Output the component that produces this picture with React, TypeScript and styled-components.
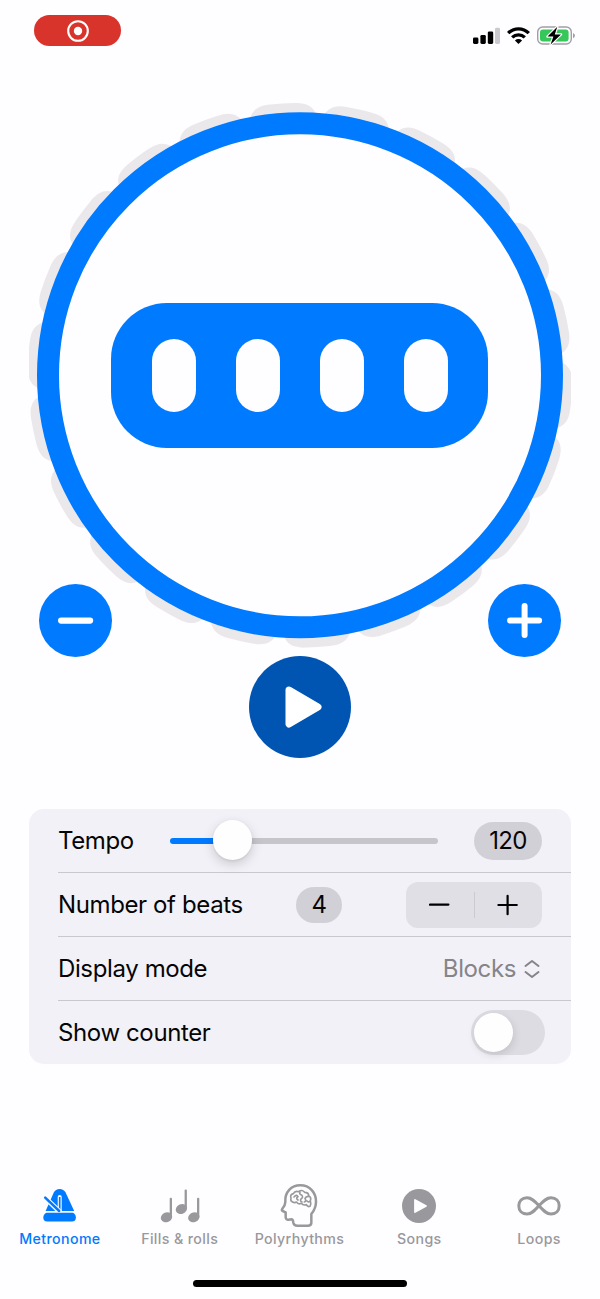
import React from "react";
import styled, { createGlobalStyle } from "styled-components";

const BLUE = "#007aff";
const PAGE = "#fefdff";
const GREY = "#99989c";

const Global = createGlobalStyle`
  *, *::before, *::after { box-sizing: border-box; }
  body {
    margin: 0;
    background: ${PAGE};
    font-family: Inter, "Liberation Sans", sans-serif;
    color: #050506;
  }
  svg { display: block; }
  button { border: 0; padding: 0; font: inherit; color: inherit; }
`;

const Screen = styled.main`
  width: 600px;
  height: 1299px;
  display: flex;
  flex-direction: column;
  overflow: hidden;
  background: ${PAGE};
`;

const StatusBar = styled.header`
  height: 103px;
  flex: none;
  display: flex;
  justify-content: space-between;
  align-items: flex-start;
  padding: 15px 25px 0 34px;
`;

const RecordPill = styled.div`
  width: 87px;
  height: 31px;
  border-radius: 15.5px;
  background: #d9342b;
  display: grid;
  place-items: center;
`;

const StatusIcons = styled.div`
  display: flex;
  gap: 7px;
  padding-top: 11px;
`;

const Dial = styled.section`
  width: 542px;
  height: 546px;
  flex: none;
  margin: 0 auto;
  display: grid;
  place-items: center;
  > * { grid-area: 1 / 1; }
`;

const Blocks = styled.div`
  width: 377px;
  height: 145px;
  margin: -1px 1px 0 0;
  border-radius: 56px;
  background: ${BLUE};
  display: flex;
  justify-content: center;
  align-items: center;
  gap: 40px;
`;

const Block = styled.div`
  width: 44px;
  height: 73px;
  border-radius: 22px;
  background: ${PAGE};
`;

const Controls = styled.div`
  height: 174.4px;
  flex: none;
  margin-top: -65px;
  padding: 0 39px;
  display: flex;
  justify-content: space-between;
  align-items: flex-start;
`;

const RoundButton = styled.button<{ $size: number; $color: string; $low?: boolean }>`
  width: ${(p) => p.$size}px;
  height: ${(p) => p.$size}px;
  border-radius: 50%;
  background: ${(p) => p.$color};
  align-self: ${(p) => (p.$low ? "flex-end" : "flex-start")};
  display: grid;
  place-items: center;
`;

const Card = styled.section`
  width: 542px;
  flex: none;
  margin: 50.6px auto 0;
  border-radius: 15px;
  background: #f2f1f7;
  padding-left: 29px;
`;

const Row = styled.div`
  height: 63.9px;
  padding-right: 29px;
  display: flex;
  align-items: center;
  &:first-child { height: 63.2px; }
  & + & { border-top: 1.4px solid #c9c8ce; }
`;

const Label = styled.span`
  padding-top: 1px;
  font-size: 24px;
  line-height: 30px;
  letter-spacing: -0.38px;
  white-space: nowrap;
`;

const Slider = styled.div`
  width: 268px;
  margin-left: auto;
  margin-right: 36.5px;
  display: flex;
  align-items: center;
`;

const Track = styled.div<{ $filled?: boolean }>`
  height: 6px;
  flex: ${(p) => (p.$filled ? "0 0 45px" : "1")};
  margin-top: 1px;
  border-radius: ${(p) => (p.$filled ? "3px 0 0 3px" : "0 3px 3px 0")};
  background: ${(p) => (p.$filled ? BLUE : "#c6c5ca")};
`;

const Thumb = styled.div`
  width: 39.5px;
  height: 39.5px;
  flex: none;
  margin: -1px -1px 0 -2px;
  border-radius: 50%;
  background: #fffeff;
  box-shadow: 0 4px 12px rgba(0, 0, 0, 0.17), 0 1px 3px rgba(0, 0, 0, 0.08);
  z-index: 1;
`;

const Value = styled.div<{ $w: number; $h: number; $push?: boolean }>`
  width: ${(p) => p.$w}px;
  height: ${(p) => p.$h}px;
  margin-left: ${(p) => (p.$push ? "auto" : "0")};
  border-radius: ${(p) => p.$h / 2}px;
  background: #d1d0d6;
  display: grid;
  place-items: center;
  font-size: 24px;
  letter-spacing: -0.6px;
`;

const Stepper = styled.div`
  width: 136px;
  height: 46px;
  margin-left: 64px;
  border-radius: 12px;
  background: #e0dfe5;
  display: flex;
  align-items: center;
`;

const Step = styled.button`
  flex: 1;
  height: 26px;
  background: none;
  display: grid;
  place-items: center;
  & + & { border-left: 1.5px solid #cbcad0; }
`;

const Picker = styled.div`
  margin-left: auto;
  display: flex;
  align-items: center;
  gap: 8px;
  color: #858489;
  padding-right: 1px;
`;

const Toggle = styled.div`
  width: 74px;
  height: 45px;
  margin: 0 -3px 0 auto;
  border-radius: 23px;
  background: #dddce2;
  padding: 0 2.5px;
  display: flex;
  align-items: center;
`;

const ToggleKnob = styled.div`
  width: 39.5px;
  height: 39.5px;
  border-radius: 50%;
  background: #fffeff;
  box-shadow: 1px 3px 8px rgba(0, 0, 0, 0.12);
`;

const TabBar = styled.nav`
  flex: none;
  margin-top: auto;
  height: 97px;
  padding-right: 1px;
  display: grid;
  grid-template-columns: repeat(5, 1fr);
`;

const Tab = styled.div<{ $active?: boolean }>`
  display: flex;
  flex-direction: column;
  align-items: center;
  color: ${(p) => (p.$active ? BLUE : GREY)};
`;

const TabLabel = styled.span`
  margin-top: 1px;
  font-size: 14.2px;
  line-height: 18px;
  font-weight: 500;
  letter-spacing: 0.38px;
  white-space: nowrap;
`;

const HomeIndicator = styled.div`
  width: 214px;
  height: 7px;
  flex: none;
  margin: 0 auto 12px;
  border-radius: 4px;
  background: #000;
`;

const NOTCHES = Array.from({ length: 22 }, (_, i) => -3.75 + (i * 360) / 22);

function DialRing() {
  return (
    <svg width="542" height="546" viewBox="29 103 542 546">
      <g fill="#ebe8ec">
        {NOTCHES.map((angle) => (
          <path
            key={angle}
            d="M265.5 121C267.5 109 274 103.6 288 103.2Q300 102.6 312 103.2C326 103.6 332.5 109 334.5 121V130H265.5Z"
            transform={`rotate(${angle} 300 375.3)`}
          />
        ))}
      </g>
      <circle cx="300" cy="375.3" r="252" fill={PAGE} stroke={BLUE} strokeWidth="22" />
    </svg>
  );
}

function Signal() {
  return (
    <svg width="27" height="18" viewBox="0 0 27 18">
      <rect x="0" y="11.5" width="5.4" height="6.5" rx="1.4" />
      <rect x="7.4" y="8.9" width="5.4" height="9.1" rx="1.4" />
      <rect x="14.8" y="5.4" width="5.4" height="12.6" rx="1.4" />
      <rect x="22" y="1.7" width="5" height="16.3" rx="1.4" fill="#cbcacf" />
    </svg>
  );
}

function Wifi() {
  return (
    <svg width="23" height="18" viewBox="0 0 23 18" fill="none" stroke="#000" strokeWidth="3.3">
      <path d="M1.2 7.2C7 1.3 16 1.3 21.8 7.2" />
      <path d="M5.2 11.4C8.7 7.9 14.3 7.9 17.8 11.4" />
      <path d="M11.5 18L7.9 14.4C10 12.6 13 12.6 15.1 14.4Z" fill="#000" stroke="none" />
    </svg>
  );
}

function Battery() {
  return (
    <svg width="38" height="20" viewBox="0 0 38 20">
      <rect x="0.7" y="1" width="33.6" height="17" rx="5" fill="none" stroke="#a09fa4" strokeWidth="1.4" />
      <path d="M36 7Q38 8 38 9.6Q38 11.2 36 12.2Z" fill="#a09fa4" />
      <rect x="3" y="3.4" width="28.6" height="12.2" rx="3" fill="#35c759" />
      <path
        d="M20.3 .8L10.5 10.6H16.4L13.6 18.4L24 8.4H17.8Z"
        fill="#000"
        stroke={PAGE}
        strokeWidth="2.4"
        paintOrder="stroke"
        strokeLinejoin="round"
      />
    </svg>
  );
}

function MetronomeIcon() {
  return (
    <svg width="40" height="46" viewBox="40 1183 40 46">
      <path
        d="M45.6 1211L53.8 1192.6Q55.6 1189 59.6 1189Q63.6 1189 65.6 1192.6L74.2 1211Z"
        fill="currentColor"
      />
      <path d="M59.7 1197V1211" stroke={PAGE} strokeWidth="4" strokeLinecap="round" />
      <path d="M59.7 1197V1211" stroke="currentColor" strokeWidth="1.7" />
      <path d="M42.5 1195.2L60 1212" stroke={PAGE} strokeWidth="5" />
      <path d="M45.2 1197.6L59.2 1211" stroke="currentColor" strokeWidth="2.5" strokeLinecap="round" />
      <path
        d="M46.5 1212.8H72.8Q75.9 1214.3 75.9 1217.5Q75.9 1221.5 72 1221.5H47.2Q43.3 1221.5 43.3 1217.5Q43.3 1214.3 46.5 1212.8Z"
        fill="currentColor"
      />
    </svg>
  );
}

const NOTES = [
  { x: 171, y: 1217.3 },
  { x: 185.9, y: 1209 },
  { x: 198.3, y: 1217.3 },
];

function NotesIcon() {
  return (
    <svg width="40" height="46" viewBox="160 1183 40 46" fill="currentColor">
      {NOTES.map((n) => (
        <g key={n.x}>
          <rect x={n.x - 1.3} y={n.y - 19.5} width="2.3" height="20" rx="1" />
          <ellipse cx={n.x - 4.5} cy={n.y} rx="5.8" ry="4.8" transform={`rotate(-22 ${n.x - 4.5} ${n.y})`} />
        </g>
      ))}
    </svg>
  );
}

function HeadIcon() {
  return (
    <svg
      width="40"
      height="46"
      viewBox="147 39 120 138"
      fill="none"
      stroke="currentColor"
      strokeWidth="7.5"
      strokeLinejoin="round"
      strokeLinecap="round"
    >
      <path d="M166 96C164 66 184 46 211 46C240 46 258 68 258 95C258 110 252 122 244 132V159Q243 167 234 167H202Q192 167 190 158Q189 148 184 148L176 149Q167 150 167 141V127L158 123Q154 120 157 116Q166 105 166 96Z" />
      <g strokeWidth="5">
        <path d="M190 97Q180 94 183 84Q179 74 190 71Q195 61 206 65Q216 57 224 67Q236 67 236 77Q245 82 241 92Q244 101 240 109Q233 112 229 104Q219 107 214 100Q204 104 200 96Q195 99 190 97Z" />
        <path d="M192 81Q200 72 204 80Q196 84 204 90M210 66Q207 73 215 75Q221 82 213 87Q209 93 216 96M236 79Q228 78 225 85Q230 93 223 96M240 94Q235 98 231 93" />
      </g>
    </svg>
  );
}

function SongsIcon() {
  return (
    <svg width="40" height="46" viewBox="0 0 40 46">
      <circle cx="20" cy="23" r="17" fill="currentColor" />
      <path d="M16 17L27 23L16 29Z" fill={PAGE} stroke={PAGE} strokeWidth="1.8" strokeLinejoin="round" />
    </svg>
  );
}

function LoopIcon() {
  return (
    <svg width="46" height="46" viewBox="0 0 46 46" fill="none" stroke="currentColor" strokeWidth="3">
      <path d="M23 22.8C18.5 17.8 15.5 14.7 11 14.7C6 14.7 2.8 18 2.8 22.8S6 31 11 31C15.5 31 18.5 27.8 23 22.8C27.5 17.8 30.5 14.7 35 14.7C40 14.7 43.2 18 43.2 22.8S40 31 35 31C30.5 31 27.5 27.8 23 22.8Z" />
    </svg>
  );
}

const TABS = [
  { label: "Metronome", icon: <MetronomeIcon />, active: true },
  { label: "Fills & rolls", icon: <NotesIcon /> },
  { label: "Polyrhythms", icon: <HeadIcon /> },
  { label: "Songs", icon: <SongsIcon /> },
  { label: "Loops", icon: <LoopIcon /> },
];

export default function App() {
  return (
    <Screen>
      <Global />
      <StatusBar>
        <RecordPill>
          <svg width="24" height="24" viewBox="0 0 24 24">
            <circle cx="12" cy="12" r="9.8" fill="none" stroke="#fff" strokeWidth="2.1" />
            <circle cx="12" cy="12" r="4.2" fill="#fff" />
          </svg>
        </RecordPill>
        <StatusIcons>
          <Signal />
          <Wifi />
          <Battery />
        </StatusIcons>
      </StatusBar>

      <Dial>
        <DialRing />
        <Blocks>
          {[1, 2, 3, 4].map((beat) => (
            <Block key={beat} />
          ))}
        </Blocks>
      </Dial>

      <Controls>
        <RoundButton $size={73} $color={BLUE} aria-label="Slower">
          <svg width="36" height="36" viewBox="0 0 36 36" stroke="#fff" strokeWidth="6.2" strokeLinecap="round">
            <path d="M3.1 17.6H32.1" />
          </svg>
        </RoundButton>
        <RoundButton $size={102} $color="#0055b3" $low aria-label="Play">
          <svg width="44" height="44" viewBox="0 0 44 44">
            <path d="M11 5L40 22L11 39Z" fill="#fff" stroke="#fff" strokeWidth="7" strokeLinejoin="round" />
          </svg>
        </RoundButton>
        <RoundButton $size={73} $color={BLUE} aria-label="Faster">
          <svg width="36" height="36" viewBox="0 0 36 36" stroke="#fff" strokeWidth="6" strokeLinecap="round">
            <path d="M3.1 17.6H32.1M17.6 3.1V32.1" />
          </svg>
        </RoundButton>
      </Controls>

      <Card>
        <Row>
          <Label>Tempo</Label>
          <Slider>
            <Track $filled />
            <Thumb />
            <Track />
          </Slider>
          <Value $w={68} $h={38}>120</Value>
        </Row>
        <Row>
          <Label>Number of beats</Label>
          <Value $w={46} $h={36} $push>4</Value>
          <Stepper>
            <Step aria-label="Fewer beats">
              <svg width="22" height="22" viewBox="0 0 22 22" stroke="#000" strokeWidth="2.2" strokeLinecap="round">
                <path d="M1 10.6H19.4" />
              </svg>
            </Step>
            <Step aria-label="More beats">
              <svg width="22" height="22" viewBox="0 0 22 22" stroke="#000" strokeWidth="2.2" strokeLinecap="round">
                <path d="M1.4 11H19.8M10.6 1.8V20.2" />
              </svg>
            </Step>
          </Stepper>
        </Row>
        <Row>
          <Label>Display mode</Label>
          <Picker>
            <Label>Blocks</Label>
            <svg
              width="17"
              height="20"
              viewBox="0 0 17 20"
              fill="none"
              stroke="currentColor"
              strokeWidth="2"
              strokeLinecap="round"
              strokeLinejoin="round"
            >
              <path d="M1.5 7L8 2L14.5 7M1.5 13L8 18L14.5 13" />
            </svg>
          </Picker>
        </Row>
        <Row>
          <Label>Show counter</Label>
          <Toggle>
            <ToggleKnob />
          </Toggle>
        </Row>
      </Card>

      <TabBar>
        {TABS.map((tab) => (
          <Tab key={tab.label} $active={tab.active}>
            {tab.icon}
            <TabLabel>{tab.label}</TabLabel>
          </Tab>
        ))}
      </TabBar>
      <HomeIndicator />
    </Screen>
  );
}
